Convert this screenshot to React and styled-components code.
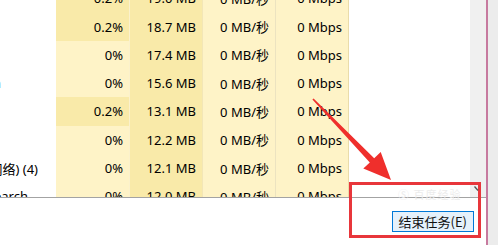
import React from 'react';
import styled, { createGlobalStyle } from 'styled-components';

const Global = createGlobalStyle`
  html, body { margin: 0; padding: 0; background: #fff; }
  body {
    width: 498px; height: 245px; overflow: hidden;
    font-family: "Noto Sans", "Noto Sans CJK SC", sans-serif;
  }
`;

const Screen = styled.div`
  position: relative;
  width: 498px;
  height: 245px;
  display: flex;
  background: #ececec;
  overflow: hidden;
`;

const Window = styled.div`
  width: 486px;
  flex: none;
  display: flex;
  flex-direction: column;
  background: #fff;
  border-right: 2px solid #c77a9f;
`;

const Content = styled.div`
  height: 197px;
  flex: none;
  display: flex;
  overflow: hidden;
`;

const Table = styled.div`
  flex: 1;
  overflow: hidden;
`;

const Rows = styled.div`
  margin-top: -15.9px;
`;

const Row = styled.div`
  display: grid;
  grid-template-columns: 56px 74px 73px 73px 73px 1fr;
  height: 28.3px;
  font-size: 13px;
  color: #000;
`;

const NameCell = styled.div`
  display: flex;
  justify-content: flex-end;
  align-items: center;
  overflow: hidden;
  white-space: nowrap;
  padding-right: ${p => p.$pr}px;
  color: ${p => p.$color || '#000'};
`;

const Cell = styled.div`
  display: flex;
  justify-content: flex-end;
  align-items: center;
  white-space: nowrap;
  padding-right: 6px;
  background: ${p => (p.$heat ? '#f9eaa9' : '#fef3c7')};
  border-right: 1px solid ${p => p.$sep || '#f3e6b6'};
`;

const Scrollbar = styled.div`
  width: 16px;
  flex: none;
  background: #f0f0f0;
`;

const Footer = styled.div`
  flex: 1;
  border-top: 1px solid #a3a3a3;
  display: flex;
  justify-content: flex-end;
  align-items: flex-start;
  padding: 13px 12px 0 0;
`;

const Button = styled.button`
  height: 21px;
  padding: 0 6px;
  margin: 0;
  background: #e5f1fb;
  border: 1px solid #0078d7;
  font-family: "Noto Sans CJK SC", "Noto Sans", sans-serif;
  font-size: 13px;
  line-height: 19px;
  color: #111;
`;

const Watermark = styled.div`
  position: absolute;
  left: 398px;
  top: 187px;
  font-family: "Noto Sans CJK SC", sans-serif;
  font-size: 11px;
  line-height: 14px;
  color: #ececec;
  letter-spacing: 1px;
`;

const Overlay = styled.svg`
  position: absolute;
  left: 0;
  top: 0;
  pointer-events: none;
`;

const data = [
  { cpu: '0.2%', mem: '19.0 MB', name: '', pr: 0 },
  { cpu: '0.2%', mem: '18.7 MB', name: '', pr: 0 },
  { cpu: '0%', mem: '17.4 MB', name: '', pr: 0 },
  { cpu: '0%', mem: '15.6 MB', name: 'n', pr: 55, color: '#1b3a8a' },
  { cpu: '0.2%', mem: '13.1 MB', name: '', pr: 0 },
  { cpu: '0%', mem: '12.2 MB', name: '', pr: 0 },
  { cpu: '0%', mem: '12.1 MB', name: '服务主机: 本地服务(网络) (4)', pr: 18 },
  { cpu: '0%', mem: '12.0 MB', name: 'Microsoft Windows Search', pr: 28 },
];

export default function App() {
  return (
    <>
      <Global />
      <Screen>
        <Window>
          <Content>
            <Table>
              <Rows>
                {data.map((r, i) => (
                  <Row key={i}>
                    <NameCell $pr={r.pr} $color={r.color}>{r.name}</NameCell>
                    <Cell $heat={r.cpu !== '0%'} $sep="#fbf1cc">{r.cpu}</Cell>
                    <Cell $heat>{r.mem}</Cell>
                    <Cell $sep="#ece3c0">0 MB/秒</Cell>
                    <Cell $sep="#eadcaa">0 Mbps</Cell>
                    <div />
                  </Row>
                ))}
              </Rows>
            </Table>
            <Scrollbar />
          </Content>
          <Footer>
            <Button>结束任务(E)</Button>
          </Footer>
        </Window>
        <Watermark>Ⓢ 百度经验</Watermark>
        <Overlay width="498" height="245" viewBox="0 0 498 245">
          <rect x="350.5" y="183.5" width="129" height="53" fill="none" stroke="#e8363b" strokeWidth="3" />
          <polygon
            points="312.4,99.6 369.8,162.4 363.3,168.6 391,180 380.7,152 374.2,158.2 313.6,98.4"
            fill="#ef2f2c"
          />
          <line x1="474.5" y1="186.5" x2="478" y2="190.5" stroke="#555" strokeWidth="1.3" />
        </Overlay>
      </Screen>
    </>
  );
}
